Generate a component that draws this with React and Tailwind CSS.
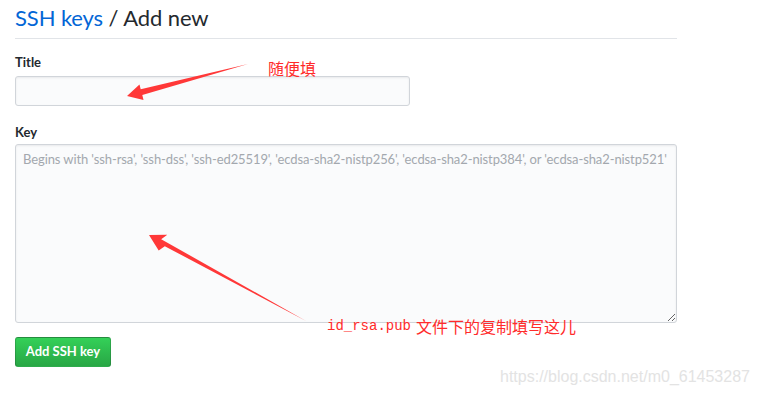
import React from 'react'

function Arrows() {
  return (
    <svg
      className="pointer-events-none absolute inset-0"
      width="758"
      height="397"
      viewBox="0 0 758 397"
    >
      <polygon
        fill="#ff3838"
        points="248,64 142.3,95.1 143.5,99.9 127,96 139.5,84.5 140.7,89.3"
      />
      <polygon
        fill="#ff3838"
        points="306,321 164.8,246.2 158.7,250.6 149,235 167.3,234.8 161.2,239.2"
      />
    </svg>
  )
}

export default function App() {
  return (
    <div className="relative h-[397px] w-[758px] overflow-hidden bg-white font-['Lato','Liberation_Sans',sans-serif] text-[#24292e]">
      <div className="ml-[15px] w-[662px]">
        <h2 className="h-[39px] border-b border-[#e1e4e8] pt-[3px] text-[22px] font-normal leading-[30px] tracking-[-0.1px]">
          <span className="text-[#0366d6]">SSH keys</span> / Add new
        </h2>

        <label className="mt-[13px] mb-[4px] block text-[13px] font-bold leading-5">Title</label>
        <input
          className="block h-[30px] w-[395px] rounded-[3px] border border-[#d1d5da] bg-[#fafbfc] px-2 text-sm shadow-[inset_0_1px_2px_rgba(27,31,35,0.075)] outline-none"
          type="text"
        />

        <label className="mt-[16px] mb-[2px] block text-[13px] font-bold leading-5">Key</label>
        <textarea
          className="block h-[179px] w-[662px] rounded-[3px] border border-[#d1d5da] bg-[#fafbfc] px-[7px] py-[4px] text-[13px] leading-5 tracking-[-0.1px] shadow-[inset_0_1px_2px_rgba(27,31,35,0.075)] outline-none placeholder:text-[#a3a8ae]"
          placeholder="Begins with 'ssh-rsa', 'ssh-dss', 'ssh-ed25519', 'ecdsa-sha2-nistp256', 'ecdsa-sha2-nistp384', or 'ecdsa-sha2-nistp521'"
        />

        <button className="mt-[14px] h-[30px] w-[96px] rounded-[3px] border border-[rgba(27,31,35,0.2)] bg-linear-to-b from-[#34d058] to-[#28a745] text-[13px] font-bold text-white">
          Add SSH key
        </button>
      </div>

      <Arrows />

      <span className="absolute left-[268px] top-[58px] font-['Noto_Sans_CJK_SC',sans-serif] text-[16px] leading-5 text-[#ff2b2b]">
        随便填
      </span>
      <span className="absolute left-[327px] top-[316px] flex items-center whitespace-nowrap leading-5 text-[#ff2b2b]">
        <span className="font-['Liberation_Mono',monospace] text-[14px]">id_rsa.pub</span>
        <span className="ml-[5px] font-['Noto_Sans_CJK_SC',sans-serif] text-[16px]">文件下的复制填写这儿</span>
      </span>

      <span className="absolute left-[500px] top-[367px] font-['Liberation_Sans',sans-serif] text-[16px] leading-5 text-[#e3e3e3]">
        https://blog.csdn.net/m0_61453287
      </span>
    </div>
  )
}
